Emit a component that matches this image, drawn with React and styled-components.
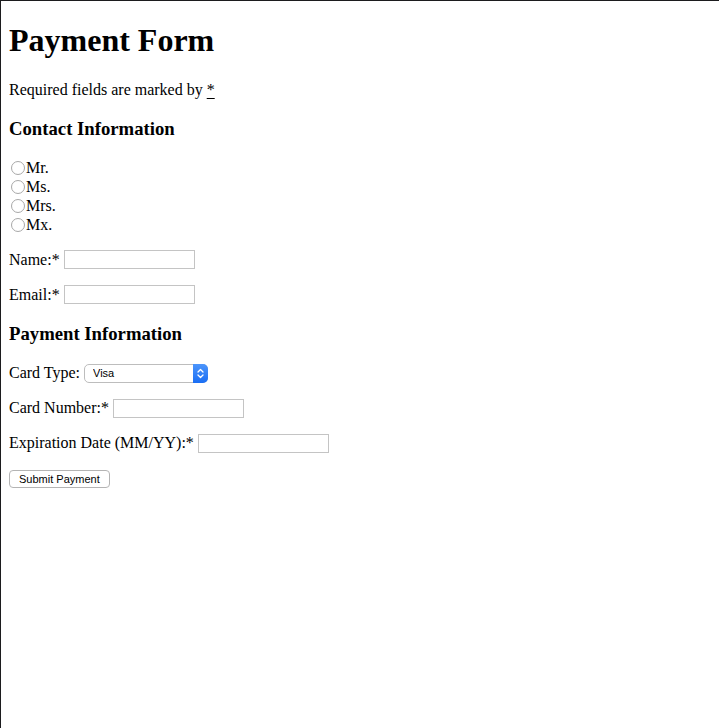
import React from 'react';
import styled, { createGlobalStyle } from 'styled-components';

const GlobalStyle = createGlobalStyle`
  html {
    border-top: 1px solid #1c1c1e;
    border-left: 1px solid #1c1c1e;
    min-height: 100%;
    box-sizing: border-box;
  }
  body {
    margin: 0 8px 8px;
    font-family: "Liberation Serif", "Times New Roman", serif;
    font-size: 16px;
    color: #000;
    background: #fff;
  }
`;

const Title = styled.h1`
  font-size: 32px;
  font-weight: bold;
  margin: 21.44px 0;
`;

const Note = styled.p`
  margin: 16px 0;
  line-height: 18px;

  abbr {
    text-decoration: underline;
    text-underline-offset: 3px;
    cursor: help;
  }
`;

const SectionTitle = styled.h3`
  font-size: 18.72px;
  font-weight: bold;
  margin: 18.72px 0;
`;

const RadioGroup = styled.div`
  display: flex;
  flex-direction: column;
`;

const RadioRow = styled.label`
  display: flex;
  align-items: center;
  height: 19px;
`;

const Radio = styled.input.attrs({ type: 'radio' })`
  appearance: none;
  width: 14px;
  height: 14px;
  margin: 0 1px 0 2px;
  border: 1px solid #a8a8a8;
  border-radius: 50%;
  background: #fff;
  box-sizing: border-box;
`;

const Field = styled.p`
  display: flex;
  align-items: center;
  gap: 4px;
  height: 19px;
  margin: 16px 0;
`;

const TextInput = styled.input`
  width: 131px;
  height: 19px;
  box-sizing: border-box;
  border: 1px solid #c4c4c4;
  border-radius: 0;
  padding: 0 3px;
  font-size: 13px;
  background: #fff;
`;

const SelectWrap = styled.span`
  position: relative;
  display: inline-flex;
  width: 124px;
  height: 19px;
`;

const Select = styled.select`
  appearance: none;
  width: 100%;
  height: 100%;
  box-sizing: border-box;
  border: 1px solid #bdbdbd;
  border-radius: 5px;
  padding: 0 20px 0 8px;
  font-family: "Liberation Sans", Arial, sans-serif;
  font-size: 11px;
  color: #000;
  background: #fff;
`;

const SelectArrow = styled.span`
  position: absolute;
  top: 0;
  right: 0;
  width: 15px;
  height: 19px;
  border-radius: 0 5px 5px 0;
  background: linear-gradient(#4c95fb, #1a6ef4);
  display: flex;
  align-items: center;
  justify-content: center;
  pointer-events: none;
`;

const Button = styled.button`
  height: 18px;
  padding: 0 9px;
  border: 1px solid #b4b4b4;
  border-radius: 4px;
  background: #fff;
  font-family: "Liberation Sans", Arial, sans-serif;
  font-size: 11px;
  color: #000;
  margin: 0;
`;

const Actions = styled.div`
  display: flex;
  margin-top: 17px;
`;

const titles = ['Mr.', 'Ms.', 'Mrs.', 'Mx.'];

export default function App() {
  return (
    <>
      <GlobalStyle />
      <Title>Payment Form</Title>
      <Note>
        Required fields are marked by <abbr title="required">*</abbr>
      </Note>
      <form onSubmit={(e) => e.preventDefault()}>
        <SectionTitle>Contact Information</SectionTitle>
        <RadioGroup>
          {titles.map((t) => (
            <RadioRow key={t}>
              <Radio name="title" value={t} />
              {t}
            </RadioRow>
          ))}
        </RadioGroup>
        <Field>
          <label htmlFor="name">Name:*</label>
          <TextInput id="name" type="text" />
        </Field>
        <Field>
          <label htmlFor="email">Email:*</label>
          <TextInput id="email" type="email" />
        </Field>

        <SectionTitle>Payment Information</SectionTitle>
        <Field>
          <label htmlFor="card">Card Type:</label>
          <SelectWrap>
            <Select id="card" defaultValue="visa">
              <option value="visa">Visa</option>
              <option value="mc">Mastercard</option>
              <option value="amex">American Express</option>
            </Select>
            <SelectArrow>
              <svg width="7" height="11" viewBox="0 0 7 11" fill="none" stroke="#fff" strokeWidth="1.3" strokeLinecap="round" strokeLinejoin="round">
                <path d="M1 4 L3.5 1.5 L6 4" />
                <path d="M1 7 L3.5 9.5 L6 7" />
              </svg>
            </SelectArrow>
          </SelectWrap>
        </Field>
        <Field>
          <label htmlFor="number">Card Number:*</label>
          <TextInput id="number" type="tel" />
        </Field>
        <Field>
          <label htmlFor="expiry">Expiration Date (MM/YY):*</label>
          <TextInput id="expiry" type="text" />
        </Field>
        <Actions>
          <Button type="submit">Submit Payment</Button>
        </Actions>
      </form>
    </>
  );
}
